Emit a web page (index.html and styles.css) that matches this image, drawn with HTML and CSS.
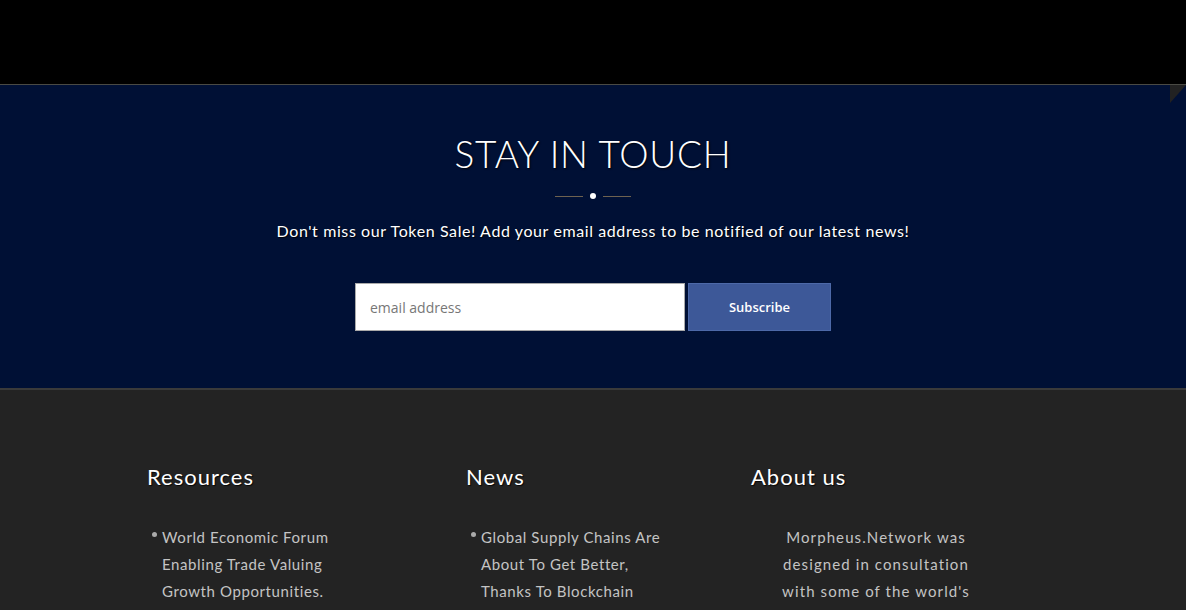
FILE: index.html
```html
<!DOCTYPE html>
<html>
<head>
<meta charset="utf-8">
<link rel="stylesheet" href="styles.css">
</head>
<body>
<header class="topbar"></header>
<section class="touch">
  <span class="corner"></span>
  <h1 class="touch-title">STAY IN TOUCH</h1>
  <div class="divider"><span class="line"></span><span class="dot"></span><span class="line"></span></div>
  <p class="touch-sub">Don't miss our Token Sale! Add your email address to be notified of our latest news!</p>
  <form class="signup">
    <input class="email" type="text" placeholder="email address">
    <button class="subscribe" type="button">Subscribe</button>
  </form>
</section>
<footer class="footer">
  <div class="cols">
    <div class="col">
      <h2 class="col-title">Resources</h2>
      <ul class="list">
        <li>World Economic Forum Enabling Trade Valuing Growth Opportunities.</li>
      </ul>
    </div>
    <div class="col">
      <h2 class="col-title">News</h2>
      <ul class="list">
        <li>Global Supply Chains Are About To Get Better, Thanks To Blockchain</li>
      </ul>
    </div>
    <div class="col">
      <h2 class="col-title">About us</h2>
      <p class="about">Morpheus.Network was designed in consultation with some of the world's</p>
    </div>
  </div>
</footer>
</body>
</html>
```
FILE: styles.css
```css
html, body { margin: 0; padding: 0; }
body { background: #232323; font-family: "Lato", "Open Sans", sans-serif; height: 610px; overflow: hidden; }

.topbar { height: 84px; background: #000; border-bottom: 1px solid #4a4a44; }

.touch {
  position: relative;
  background: #001035;
  height: 303px;
  box-sizing: border-box;
  padding-top: 46px;
  display: flex;
  flex-direction: column;
  align-items: center;
}
.corner {
  position: absolute;
  right: 0;
  top: 0;
  width: 0; height: 0;
  border-top: 18px solid #222;
  border-right: 16px solid transparent;
}
.touch-title {
  margin: 0;
  font-family: "Lato", sans-serif;
  font-weight: 300;
  font-size: 37px;
  line-height: 46px;
  letter-spacing: 0.8px;
  color: #fff;
  text-shadow: 1px 1px 2px rgba(0,0,0,0.8);
}
.divider { display: flex; align-items: center; gap: 7px; margin-top: 15px; height: 8px; }
.divider .line { width: 28px; height: 1px; background: #6e6250; }
.divider .dot { width: 6px; height: 6px; border-radius: 50%; background: #fff; }
.touch-sub {
  margin: 21px 0 0;
  font-family: "Lato", sans-serif;
  font-size: 16px;
  line-height: 20px;
  letter-spacing: 0.6px;
  color: #fff;
  text-shadow: 1px 1px 1px rgba(0,0,0,0.8);
}
.signup { display: flex; gap: 3px; margin-top: 42px; }
.email {
  width: 330px; height: 48px; box-sizing: border-box;
  border: 1px solid #aaa; background: #fff;
  padding: 0 14px;
  font-family: "Open Sans", sans-serif; font-size: 14px; color: #333;
  outline: none;
}
.email::placeholder { color: #777; }
.subscribe {
  width: 143px; height: 48px; box-sizing: border-box;
  border: 1px solid #4d69a8; background: #3d5898; color: #fff;
  font-family: "Open Sans", sans-serif; font-weight: 600; font-size: 13px;
}

.footer { border-top: 2px solid #3a3a3a; }
.cols { display: grid; grid-template-columns: 319px 285px 260px; padding: 72px 0 0 147px; }
.col-title {
  margin: 0;
  font-family: "Lato", sans-serif; font-weight: 400;
  font-size: 22px; line-height: 30px; color: #fff;
  letter-spacing: 1px;
  text-shadow: 1px 1px 1px rgba(0,0,0,0.8);
}
.list { list-style: none; margin: 32px 0 0; padding: 0 0 0 15px; width: 190px; }
.list li {
  position: relative;
  font-family: "Lato", sans-serif; font-size: 15px; line-height: 27px;
  letter-spacing: 0.6px; color: #c4c4c4;
}
.list li::before {
  content: ""; position: absolute; left: -10px; top: 8px;
  width: 5px; height: 5px; border-radius: 50%; background: #aaa;
}
.about {
  margin: 32px 0 0 25px; width: 200px; text-align: center;
  font-family: "Lato", sans-serif; font-size: 15px; line-height: 27px;
  letter-spacing: 1.1px; color: #c4c4c4;
}
```
